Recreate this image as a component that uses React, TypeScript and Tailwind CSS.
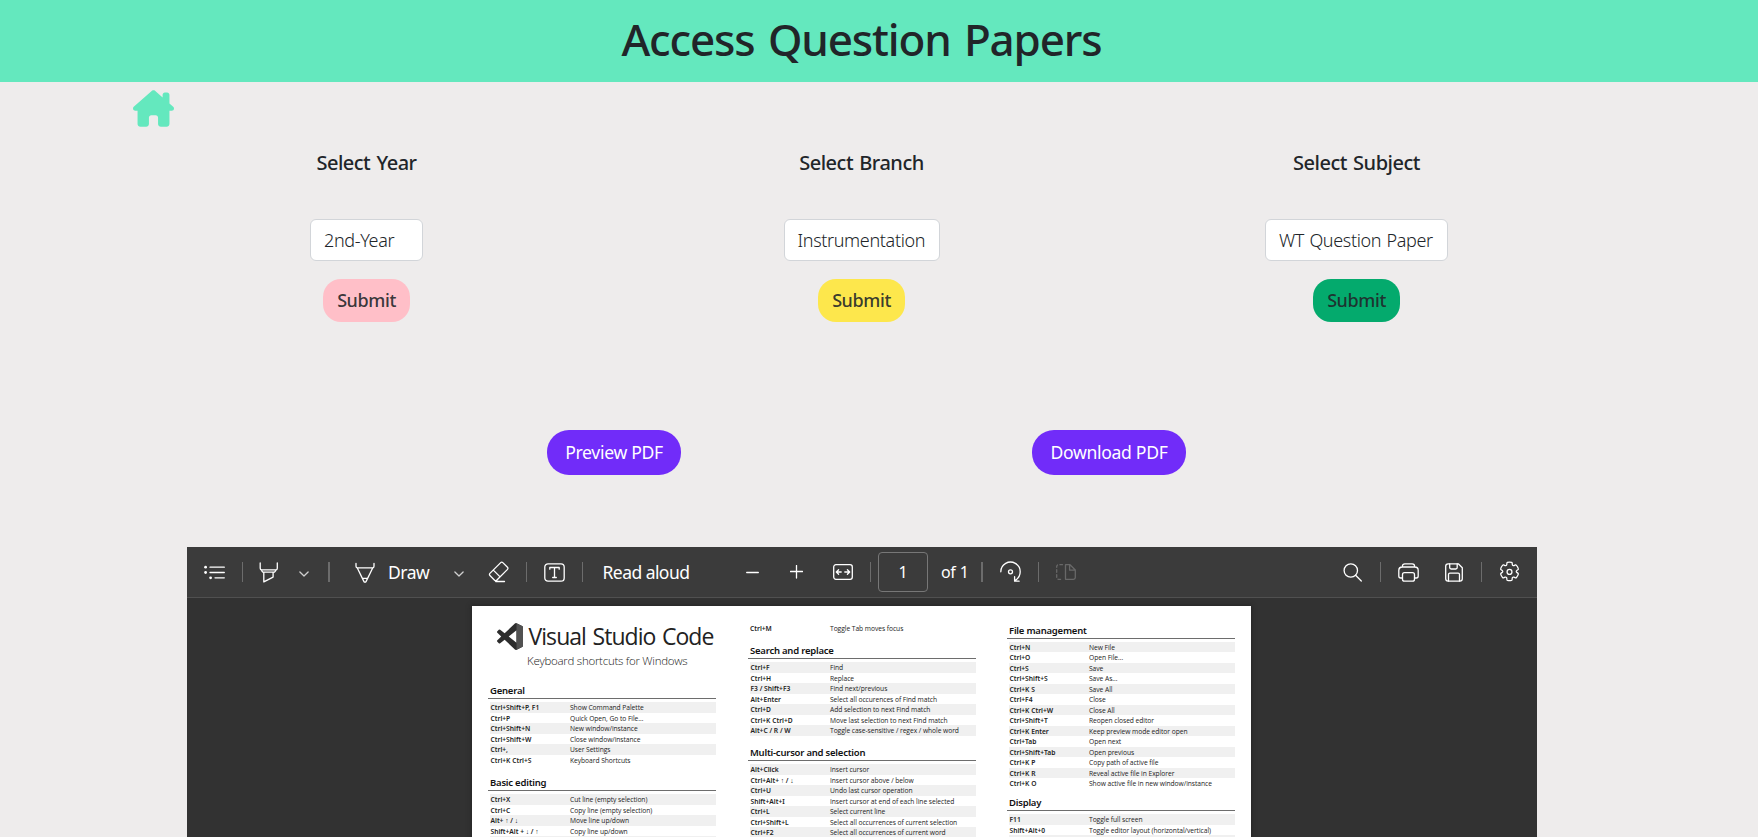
import type { ReactNode } from "react";
import { FaHouseChimney } from "react-icons/fa6";

type Shortcut = [string, string];

const general: Shortcut[] = [
  ["Ctrl+Shift+P, F1", "Show Command Palette"],
  ["Ctrl+P", "Quick Open, Go to File…"],
  ["Ctrl+Shift+N", "New window/instance"],
  ["Ctrl+Shift+W", "Close window/instance"],
  ["Ctrl+,", "User Settings"],
  ["Ctrl+K Ctrl+S", "Keyboard Shortcuts"],
];

const basicEditing: Shortcut[] = [
  ["Ctrl+X", "Cut line (empty selection)"],
  ["Ctrl+C", "Copy line (empty selection)"],
  ["Alt+ ↑ / ↓", "Move line up/down"],
  ["Shift+Alt + ↓ / ↑", "Copy line up/down"],
  ["", ""],
];

const searchReplace: Shortcut[] = [
  ["Ctrl+F", "Find"],
  ["Ctrl+H", "Replace"],
  ["F3 / Shift+F3", "Find next/previous"],
  ["Alt+Enter", "Select all occurences of Find match"],
  ["Ctrl+D", "Add selection to next Find match"],
  ["Ctrl+K Ctrl+D", "Move last selection to next Find match"],
  ["Alt+C / R / W", "Toggle case-sensitive / regex / whole word"],
];

const multiCursor: Shortcut[] = [
  ["Alt+Click", "Insert cursor"],
  ["Ctrl+Alt+ ↑ / ↓", "Insert cursor above / below"],
  ["Ctrl+U", "Undo last cursor operation"],
  ["Shift+Alt+I", "Insert cursor at end of each line selected"],
  ["Ctrl+L", "Select current line"],
  ["Ctrl+Shift+L", "Select all occurrences of current selection"],
  ["Ctrl+F2", "Select all occurrences of current word"],
];

const fileManagement: Shortcut[] = [
  ["Ctrl+N", "New File"],
  ["Ctrl+O", "Open File..."],
  ["Ctrl+S", "Save"],
  ["Ctrl+Shift+S", "Save As..."],
  ["Ctrl+K S", "Save All"],
  ["Ctrl+F4", "Close"],
  ["Ctrl+K Ctrl+W", "Close All"],
  ["Ctrl+Shift+T", "Reopen closed editor"],
  ["Ctrl+K Enter", "Keep preview mode editor open"],
  ["Ctrl+Tab", "Open next"],
  ["Ctrl+Shift+Tab", "Open previous"],
  ["Ctrl+K P", "Copy path of active file"],
  ["Ctrl+K R", "Reveal active file in Explorer"],
  ["Ctrl+K O", "Show active file in new window/instance"],
];

const display: Shortcut[] = [
  ["F11", "Toggle full screen"],
  ["Shift+Alt+0", "Toggle editor layout (horizontal/vertical)"],
  ["", ""],
];

function Rows({ items }: { items: Shortcut[] }) {
  return (
    <div className="ml-0.5">
      {items.map(([keys, text]) => (
        <div
          key={keys}
          className="flex h-[10.5px] items-center pl-[0.5px] pt-px text-[6.7px] leading-[9.5px] whitespace-nowrap text-[#222] odd:bg-[#f0f0f0]"
        >
          <span className="w-[79.5px] shrink-0 font-semibold">{keys}</span>
          <span className="font-['Open_Sans',sans-serif] tracking-[-0.05px]">{text}</span>
        </div>
      ))}
    </div>
  );
}

function SectionTitle({ children }: { children: ReactNode }) {
  return (
    <h3 className="mb-[3px] h-4 border-b border-[#6d6d6d] pl-0.5 text-[9.5px] leading-[15px] font-semibold tracking-[-0.22px] whitespace-nowrap text-[#111]">
      {children}
    </h3>
  );
}

function Picker({ label, value, box, button }: { label: string; value: string; box: string; button: string }) {
  return (
    <div className="flex flex-col items-center">
      <h2 className="pt-px text-xl leading-6 font-medium tracking-[-0.5px] [word-spacing:1.5px]">{label}</h2>
      <div
        className={`mt-11 flex h-[42px] items-center rounded-md border border-[#d2d5d9] bg-white pl-[13px] text-lg font-light tracking-[-0.35px] whitespace-nowrap [word-spacing:1px] ${box}`}
      >
        {value}
      </div>
      <button
        className={`mt-[18px] h-[43px] w-[87px] rounded-[18px] pb-0.5 text-lg font-medium tracking-[-0.4px] text-[#212529]/90 ${button}`}
      >
        Submit
      </button>
    </div>
  );
}

function Icon({ className, box, children }: { className: string; box: string; children: ReactNode }) {
  return (
    <svg
      className={`shrink-0 ${className}`}
      viewBox={box}
      fill="none"
      stroke="currentColor"
      strokeWidth="1.3"
      strokeLinecap="round"
      strokeLinejoin="round"
    >
      {children}
    </svg>
  );
}

function Separator({ className }: { className: string }) {
  return <span className={`h-5 shrink-0 bg-[#6c6c6c] ${className}`} />;
}

function Chevron({ className }: { className: string }) {
  return (
    <Icon className={`mt-1 h-1.5 w-2.5 text-[#cfcfcf] ${className}`} box="0 0 10 6">
      <path d="M.9 1 5 5l4.1-4" />
    </Icon>
  );
}

function Toolbar() {
  return (
    <div className="flex h-[51px] items-center border-b border-[#505050] bg-[#3b3b3b] text-white">
      <Icon className="ml-[17px] h-[15px] w-[21px]" box="0 0 21 15">
        <path d="M6 2.2h14.3M6 7.5h14.3M11 12.8h9.3" />
        <g fill="currentColor" stroke="none">
          <circle cx="1.6" cy="2.2" r="1.4" />
          <circle cx="1.6" cy="7.5" r="1.4" />
          <circle cx="6.6" cy="12.8" r="1.4" />
        </g>
      </Icon>
      <Separator className="ml-[17px] w-px" />
      <Icon className="ml-[15.5px] h-[21px] w-5" box="0 0 20 21">
        <path d="M1.2 1v5.200c0 .9.700 1.600 1.600 1.600h13.900c.9 0 1.600-.7 1.600-1.600V1M1.500 7.300l2.300 2.900h11.700l2.300-2.900M4.800 10.300v9.600l9.300-4.800v-4.800" />
      </Icon>
      <Chevron className="ml-5" />
      <Separator className="ml-[19.5px] w-0.5" />
      <Icon className="ml-[24.5px] h-[21px] w-5" box="0 0 20 21">
        <path d="M1 1.500v2.700c0 .9.700 1.600 1.600 1.600h14.800c.9 0 1.600-.7 1.600-1.600V1.500M2.300 6l6.700 13.600c.4.800 1.600.8 2 0L17.700 6M7.600 16.300h4.800" />
      </Icon>
      <span className="ml-[13.5px] w-[41px] text-[17.5px] tracking-[-0.5px]">Draw</span>
      <Chevron className="ml-[25px]" />
      <Icon className="ml-6 h-[22px] w-[22px]" box="0 0 22 22">
        <path d="M12.700 1.600c.6-.6 1.500-.6 2.100 0l4.700 4.700c.6.6.6 1.500 0 2.100L8.700 19.200c-.6.6-1.500.6-2.100 0l-4.700-4.700c-.6-.6-.6-1.500 0-2.100zM5.300 9.100l6.800 6.800M7.700 20.500h8.800" />
      </Icon>
      <Separator className="ml-4 w-px" />
      <Icon className="ml-[17px] h-[19px] w-[21px]" box="0 0 21 19">
        <rect x=".8" y=".8" width="19.4" height="17.4" rx="3.2" />
        <path d="M5.800 6.200V4.500h9.400v1.700M10.500 4.500v10M8.700 14.500h3.600" />
      </Icon>
      <Separator className="ml-[17px] w-px" />
      <span className="ml-[19.5px] w-[87.5px] text-[17.5px] tracking-[-0.55px] whitespace-nowrap">Read aloud</span>
      <Icon className="ml-14 h-[13px] w-[13px]" box="0 0 13 13">
        <path d="M.7 6.500h11.600" />
      </Icon>
      <Icon className="ml-[31px] h-[14px] w-[13px]" box="0 0 13 14">
        <path d="M.5 6.500h12M6.500.5v12.500" />
      </Icon>
      <Icon className="ml-[30px] h-4 w-5" box="0 0 20 16">
        <rect x=".7" y=".7" width="18.6" height="14.6" rx="2.2" />
        <path d="M3.500 8h4.700M5.600 5.700 3.300 8l2.300 2.300M16.500 8h-4.700M14.400 5.700 16.700 8l-2.300 2.300" />
      </Icon>
      <Separator className="ml-[17px] w-px" />
      <div className="ml-[7px] flex h-10 w-[50px] items-center justify-center rounded-sm border border-[#777] text-base">
        1
      </div>
      <span className="ml-[13px] w-[25px] text-base tracking-[-0.5px] whitespace-nowrap [word-spacing:1px]">of 1</span>
      <Separator className="ml-[15px] w-0.5" />
      <Icon className="ml-[17px] h-[22px] w-[21px]" box="0 0 21 22">
        <path d="M.8 10.800a9.700 9.700 0 1 1 14.600 8.400M19.100 20.200h-4.500v-4.500" />
        <circle cx="10.5" cy="10.8" r="2" />
      </Icon>
      <Separator className="ml-[17px] w-px" />
      <Icon className="ml-[17px] h-4 w-5 text-[#686868]" box="0 0 20 16">
        <path d="M9.500.7v14.600h8c1 0 1.800-.8 1.800-1.800V6L14 .7zM13.600.9v5.300h5.400" />
        <path d="M6.500.7h-4c-1 0-1.800.8-1.800 1.800v11c0 1 .8 1.800 1.800 1.800h4" strokeDasharray="2.6 2.4" />
      </Icon>
      <Icon className="ml-auto h-[19px] w-5" box="0 0 20 19">
        <circle cx="7.8" cy="7.5" r="6.700" />
        <path d="m12.600 12.200 5.700 5.800" />
      </Icon>
      <Separator className="ml-[17px] w-px" />
      <Icon className="ml-[17px] h-[19px] w-[21px]" box="0 0 21 19">
        <path d="M4.500 15H2.700C1.600 15 .8 14.200.8 13V7.400C.8 5.500 2.300 4 4.200 4h12.600c1.900 0 3.400 1.500 3.400 3.400V13c0 1.200-.8 2-1.900 2h-1.800M4.400 4V3.200c0-1.300 1-2.400 2.400-2.400h7.400c1.300 0 2.400 1 2.400 2.400V4" />
        <rect x="4.500" y="9.700" width="12" height="8.500" rx="2" />
      </Icon>
      <Icon className="ml-[25.5px] h-[19px] w-[18px]" box="0 0 18 19">
        <path d="M.7 3.200C.7 1.800 1.800.8 3.100.8h10.200l4 4v11c0 1.300-1.100 2.400-2.400 2.400H3.100c-1.300 0-2.400-1.100-2.400-2.400z" />
        <path d="M4.700 1v3.600c0 .8.600 1.400 1.400 1.400h4.700c.8 0 1.400-.6 1.400-1.400V1M3.500 18v-6.400c0-.8.600-1.400 1.400-1.400h8.200c.8 0 1.400.6 1.400 1.400V18" />
      </Icon>
      <Separator className="ml-[18.5px] w-px" />
      <Icon className="mr-[17px] ml-[17px] h-[22px] w-[21px]" box="1.3 1 21.4 22">
        <path d="M12 2c.7 0 1.400.1 2.100.2.300.1.500.3.600.6l.2 1.700c.1.800.9 1.300 1.700 1l1.500-.700c.3-.1.600 0 .8.200 1 1 1.700 2.300 2.100 3.600.1.300 0 .6-.2.800l-1.400 1c-.7.500-.7 1.500 0 2l1.400 1c.2.200.3.500.2.800-.4 1.300-1.100 2.600-2.100 3.600-.2.200-.5.300-.8.200l-1.600-.700c-.7-.3-1.600.2-1.700 1l-.2 1.700c0 .3-.2.500-.5.600-1.400.3-2.800.3-4.200 0-.3-.1-.5-.3-.5-.6l-.2-1.700c-.1-.8-1-1.300-1.700-1l-1.600.7c-.3.100-.6 0-.8-.200-1-1-1.700-2.300-2.100-3.600-.1-.3 0-.6.200-.8l1.400-1c.7-.500.7-1.500 0-2l-1.400-1c-.2-.2-.3-.5-.2-.8.4-1.300 1.100-2.600 2.100-3.600.2-.2.500-.3.800-.2l1.600.7c.7.300 1.600-.2 1.700-1l.2-1.700c0-.3.300-.5.500-.6.700-.1 1.400-.2 2.100-.2z" />
        <circle cx="12" cy="11.9" r="2.5" />
      </Icon>
    </div>
  );
}

function CodeLogo() {
  return (
    <svg className="ml-[8.5px] h-[27px] w-[26px] shrink-0" viewBox="0 0 100 100" preserveAspectRatio="none">
      <path
        fill="#2d2d2d"
        fillRule="evenodd"
        d="M70.9 99.3a6.200 6.200 0 0 0 5-.2l20.600-9.900a6.300 6.300 0 0 0 3.500-5.600V16.400a6.300 6.300 0 0 0-3.500-5.600L75.900.9a6.200 6.200 0 0 0-7.100 1.200L29.400 38 12.200 25a4.200 4.200 0 0 0-5.300.2L1.400 30.200a4.200 4.200 0 0 0 0 6.200L16.200 50 1.400 63.600a4.200 4.200 0 0 0 0 6.200l5.500 5a4.200 4.200 0 0 0 5.300.2l17.200-13 39.400 36a6.200 6.200 0 0 0 2.100 1.300zM75 27.300 45.100 50 75 72.700z"
      />
      <path fill="#515151" d="M75 1.500 96.500 10.800A6.300 6.300 0 0 1 100 16.400v67.200a6.300 6.300 0 0 1-3.500 5.600L75 99z" />
    </svg>
  );
}

export default function App() {
  return (
    <div className="flex h-[837px] w-full flex-col overflow-hidden bg-[#eeecec] font-['Noto_Sans',sans-serif] text-[#212529]">
      <header className="h-[82px] shrink-0 bg-[#64e8be]">
        <h1 className="w-[1723px] text-center text-[44px] leading-[78px] font-medium tracking-[-1.15px] [word-spacing:3px]">
          Access Question Papers
        </h1>
      </header>

      <div className="h-[68px] shrink-0 pt-2 pl-[132.5px]">
        <FaHouseChimney className="h-[37px] w-[41px] text-[#64e8be]" />
      </div>

      <main className="w-[1723px] shrink-0">
        <div className="ml-[119px] grid w-[1485px] grid-cols-3">
          <Picker label="Select Year" value="2nd-Year" box="w-[113px]" button="bg-[#ffbfc8]" />
          <Picker label="Select Branch" value="Instrumentation" box="w-[156px]" button="bg-[#fde74c]" />
          <Picker label="Select Subject" value="WT Question Paper" box="w-[183px]" button="bg-[#04aa6d]" />
        </div>

        <div className="mt-[108px] ml-[547px] flex gap-[351px] text-[17.6px] tracking-[-0.32px] text-white">
          <button className="h-[45px] w-[134px] rounded-[22px] bg-[#712cf9]">Preview PDF</button>
          <button className="h-[45px] w-[154px] rounded-[22px] bg-[#712cf9]">Download PDF</button>
        </div>

        <section className="mt-[72px] ml-[187px] h-[290px] w-[1350px] overflow-hidden bg-[#323232]">
          <Toolbar />
          <article className="mt-2 ml-[285px] flex h-[400px] w-[779px] bg-white pl-4 shadow-[0_0_4px_1px_#262626]">
            <div className="w-[228px] pt-4">
              <div className="flex items-center">
                <CodeLogo />
                <h2 className="ml-1.5 font-['Open_Sans',sans-serif] text-[23px] leading-7 tracking-[-0.95px] whitespace-nowrap text-[#222] [word-spacing:1.5px]">
                  Visual Studio Code
                </h2>
              </div>
              <p className="mt-1 mb-[15px] pl-[39px] font-['Open_Sans',sans-serif] text-[11.5px] leading-[14px] font-light tracking-[-0.27px] whitespace-nowrap text-[#222]">
                Keyboard shortcuts for Windows
              </p>
              <SectionTitle>General</SectionTitle>
              <Rows items={general} />
              <div className="h-[10px]" />
              <SectionTitle>Basic editing</SectionTitle>
              <Rows items={basicEditing} />
            </div>
            <div className="ml-8 w-[228px] pt-[17.5px]">
              <div className="flex h-[10.5px] items-center pl-[2px] text-[6.7px] leading-[9.5px] whitespace-nowrap text-[#222]">
                <span className="w-20 shrink-0 font-semibold">Ctrl+M</span>
                <span className="font-['Open_Sans',sans-serif] tracking-[-0.05px]">Toggle Tab moves focus</span>
              </div>
              <div className="h-[9px]" />
              <SectionTitle>Search and replace</SectionTitle>
              <Rows items={searchReplace} />
              <div className="h-[9.5px]" />
              <SectionTitle>Multi-cursor and selection</SectionTitle>
              <Rows items={multiCursor} />
            </div>
            <div className="ml-[31px] w-[228px] pt-[16.5px]">
              <SectionTitle>File management</SectionTitle>
              <Rows items={fileManagement} />
              <div className="h-[6.5px]" />
              <SectionTitle>Display</SectionTitle>
              <Rows items={display} />
            </div>
          </article>
        </section>
      </main>
    </div>
  );
}
